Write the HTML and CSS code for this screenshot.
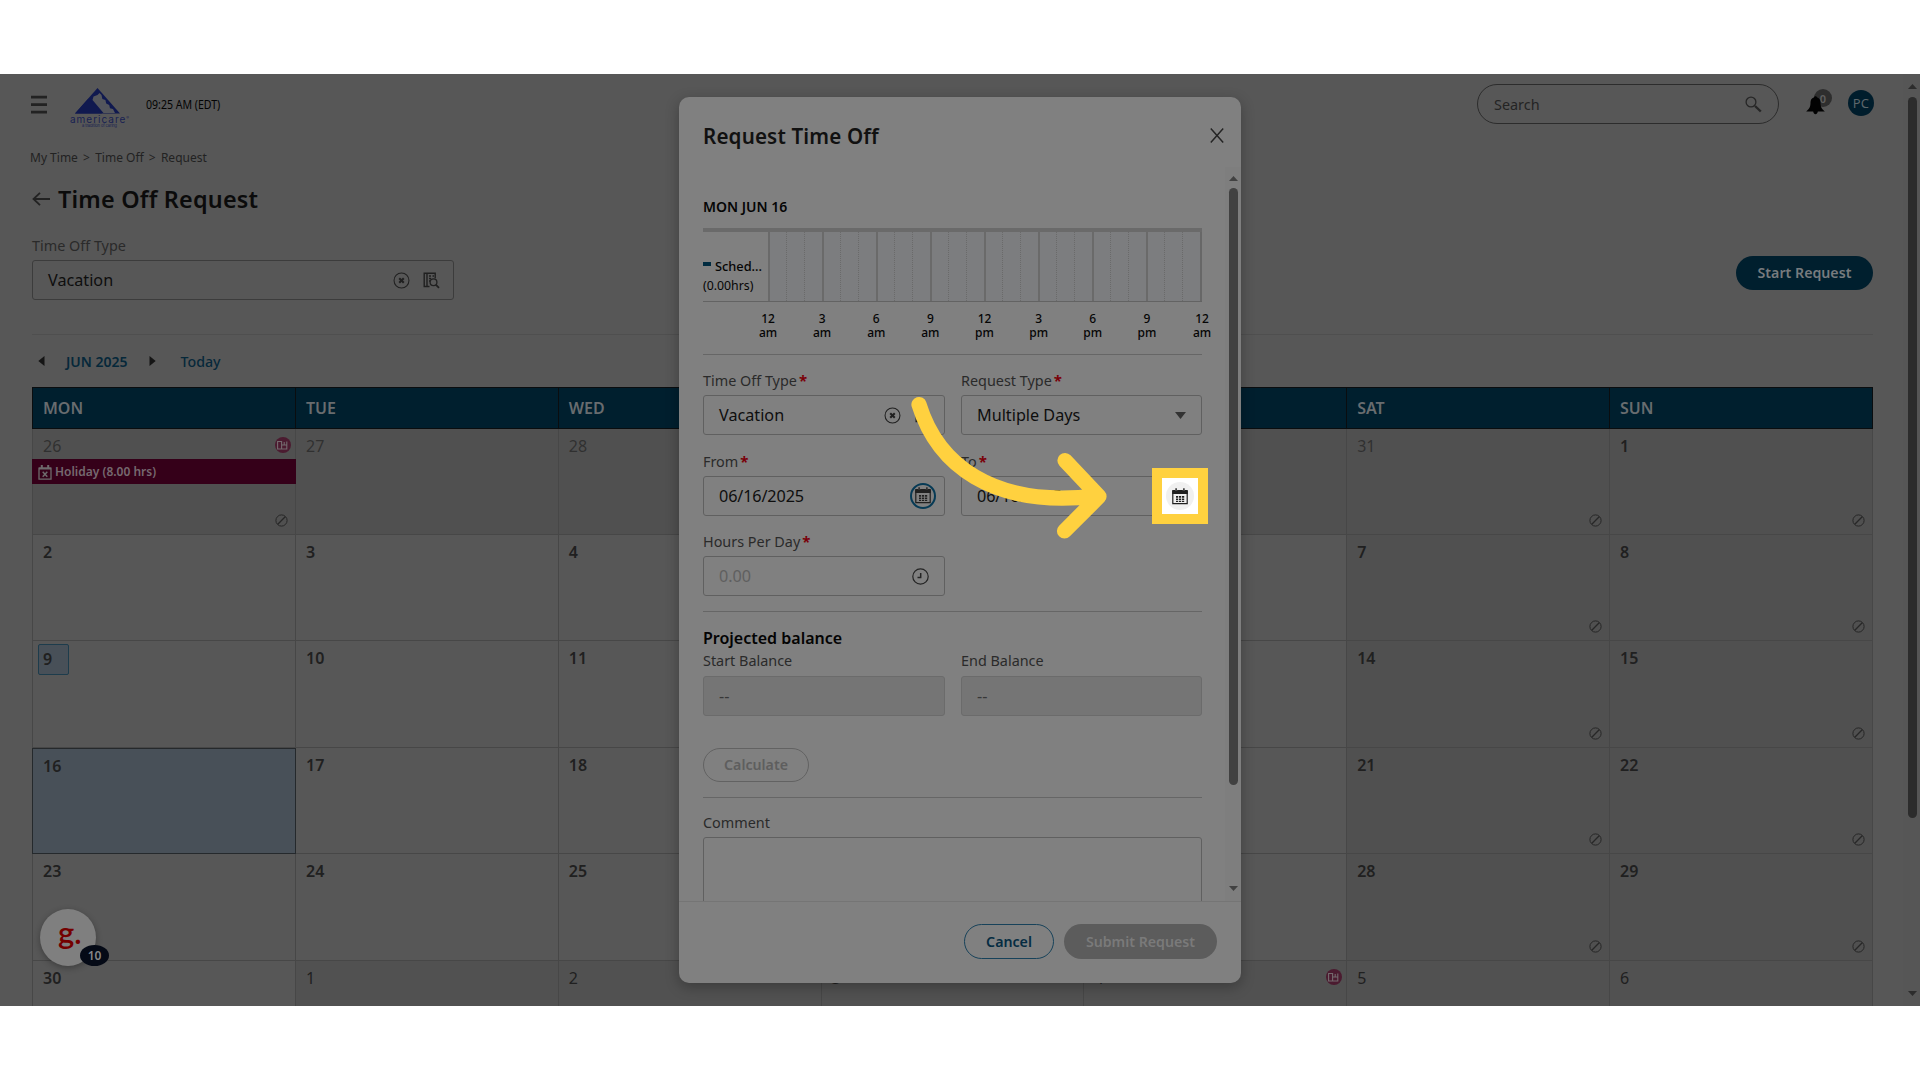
FILE: index.html
```
<!DOCTYPE html>
<html lang="en">
<head>
<meta charset="utf-8">
<title>Time Off Request</title>
<link rel="stylesheet" href="styles.css">
</head>
<body>
<svg class="defs" width="0" height="0">
  <symbol id="i-block" viewBox="0 0 13 13"><circle cx="6.5" cy="6.5" r="5.6" fill="none" stroke="currentColor"/><path d="M2.8 10.2 10.2 2.8" stroke="currentColor" stroke-width="1.3"/></symbol>
  <symbol id="i-badge" viewBox="0 0 16 16"><circle cx="8" cy="8" r="8" fill="#4b1b30"/><path d="M2.600 4.500h4v7.500h-4zM6.600 8h5.200M6.600 12h5.200V4.500M9.200 5v3" fill="none" stroke="#746a6e" stroke-width="1.100"/></symbol>
  <symbol id="i-clear" viewBox="0 0 18 18"><circle cx="9" cy="9" r="7.900" fill="none" stroke="currentColor" stroke-width="1.100"/><path d="M6.600 6.600l4.800 4.800M11.400 6.600l-4.800 4.800" stroke="currentColor" stroke-width="2.200"/></symbol>
  <symbol id="i-lookup" viewBox="0 0 17 17"><path d="M6.500 14.500h-5.300V1.200h11v5M4 1v13.500M6 4h2M9.500 4h1.500M6 6.500h2M6 9h1" fill="none" stroke="currentColor" stroke-width="1.400"/><circle cx="10.500" cy="10.200" r="3.400" fill="none" stroke="currentColor" stroke-width="1.300"/><path d="M13 12.800l3 3" stroke="currentColor" stroke-width="1.800"/></symbol>
  <symbol id="i-cal" viewBox="0 0 16 17"><path d="M.8 3.500h14.400V15.700H.8z" fill="none" stroke="currentColor" stroke-width="1.200"/><path d="M.2 2h3v1.800h1.900V2h5.800v1.800h1.900V2h3v4H.2zM3.400.3h1.400v3H3.400zM11.200.3h1.400v3h-1.400z" fill="currentColor"/><path d="M4 8h2.200v1.800H4zM7 8h2.200v1.800H7zM10 8h2.200v1.800H10zM4 10.500h2.200v1.600H4zM7 10.500h2.200v1.600H7zM10 10.500h2.200v1.600H10zM4 12.700h2.200v1.200H4zM7 12.700h2.200v1.200H7zM10 12.700h2.200v1.200H10z" fill="currentColor"/></symbol>
</svg>

<div class="app">
  <main class="page">
    <header class="topbar">
      <svg class="menu" width="16" height="19" viewBox="0 0 16 19"><path d="M0 2.200h16M0 9.700h16M0 17.200h16" stroke="#222" stroke-width="2.800"/></svg>
      <div class="logo">
        <svg width="46" height="26" viewBox="0 0 46 26"><path d="M22.500 0 45 25.500H0z" fill="#10194f"/><path d="M18.500 8.500 17.500 12l11 13H40l-2-4-3-.8-.8-3.200-3-1.500-.8-3.500-3-1L26.500 7l-2-2-2 2z" fill="#54565c"/><path d="M13.500 10.500 27 25.500H0z" fill="#10194f"/></svg>
        <span class="logo-name">americare<sup>®</sup></span>
        <span class="logo-tag">a tradition of caring</span>
      </div>
      <span class="clock">09:25 AM (EDT)</span>
      <div class="search"><span>Search</span>
        <svg width="17" height="17" viewBox="0 0 17 17" fill="none" stroke="#262626"><circle cx="6" cy="6" r="4.900" stroke-width="1.300"/><path d="M10 10l5.800 5.500" stroke-width="2.400"/></svg>
      </div>
      <div class="bell">
        <span class="count">0</span>
        <svg width="19" height="19" viewBox="0 0 19 19"><path d="M9.500.2c-.8 0-1.500.6-1.700 1.400C5.500 2.200 4.600 4 4.500 6.500c-.1 4-.5 5.500-4.300 9h7c.3 1.700 1.200 2.700 2.300 2.700s2-1 2.300-2.700h7c-3.800-3.500-4.200-5-4.300-9-.1-2.500-1-4.300-3.300-4.900C11 .8 10.300.2 9.500.2z" fill="#020202"/></svg>
      </div>
      <span class="avatar">PC</span>
    </header>
    <nav class="crumbs"><span>My Time</span><span>&gt;</span><span>Time Off</span><span>&gt;</span><span>Request</span></nav>
    <div class="title">
      <svg width="18" height="14" viewBox="0 0 18 14" fill="none" stroke="#222" stroke-width="1.800"><path d="M18 7H1.500M8 .8 1.500 7 8 13.200"/></svg>
      <h1>Time Off Request</h1>
    </div>
    <section class="filter">
      <div class="field"><label>Time Off Type</label>
        <div class="input"><span>Vacation</span><svg class="clear" width="17" height="17"><use href="#i-clear"/></svg><svg width="17" height="17"><use href="#i-lookup"/></svg></div>
      </div>
      <button class="start">Start Request</button>
    </section>
    <div class="calnav">
      <svg width="7" height="10" viewBox="0 0 7 10"><path d="M6.500 0v10L.3 5z" fill="#151515"/></svg>
      <b>JUN 2025</b>
      <svg width="7" height="10" viewBox="0 0 7 10"><path d="M.5 0v10l6.200-5z" fill="#151515"/></svg>
      <span>Today</span>
    </div>
    <section class="calendar">
      <div class="head">MON</div><div class="head">TUE</div><div class="head">WED</div><div class="head">THU</div><div class="head">FRI</div><div class="head">SAT</div><div class="head">SUN</div>

      <div class="day out blocked"><span>26</span><svg class="mark" width="16" height="16"><use href="#i-badge"/></svg>
        <div class="event"><svg width="14" height="15" viewBox="0 0 14 15" fill="none" stroke="#6e6a6c"><path d="M1 3.200h12v11H1z" stroke-width="1.300"/><path d="M1 3.500h12M3.800 0v4M10.200 0v4" stroke-width="2"/><path d="M4.700 6.800l4.600 5M9.300 6.800l-4.600 5" stroke-width="1.500"/></svg>Holiday (8.00 hrs)</div>
        <svg class="block" width="13" height="13"><use href="#i-block"/></svg></div>
      <div class="day out"><span>27</span></div><div class="day out"><span>28</span></div><div class="day out"><span>29</span></div><div class="day out"><span>30</span></div>
      <div class="day out"><span>31</span><svg class="block" width="13" height="13"><use href="#i-block"/></svg></div>
      <div class="day off"><span>1</span><svg class="block" width="13" height="13"><use href="#i-block"/></svg></div>

      <div class="day"><span>2</span></div><div class="day"><span>3</span></div><div class="day"><span>4</span></div><div class="day"><span>5</span></div><div class="day"><span>6</span></div>
      <div class="day off"><span>7</span><svg class="block" width="13" height="13"><use href="#i-block"/></svg></div>
      <div class="day off"><span>8</span><svg class="block" width="13" height="13"><use href="#i-block"/></svg></div>

      <div class="day today"><span>9</span></div><div class="day"><span>10</span></div><div class="day"><span>11</span></div><div class="day"><span>12</span></div><div class="day"><span>13</span></div>
      <div class="day off"><span>14</span><svg class="block" width="13" height="13"><use href="#i-block"/></svg></div>
      <div class="day off"><span>15</span><svg class="block" width="13" height="13"><use href="#i-block"/></svg></div>

      <div class="day picked"><span>16</span></div><div class="day"><span>17</span></div><div class="day"><span>18</span></div><div class="day"><span>19</span></div><div class="day"><span>20</span></div>
      <div class="day off"><span>21</span><svg class="block" width="13" height="13"><use href="#i-block"/></svg></div>
      <div class="day off"><span>22</span><svg class="block" width="13" height="13"><use href="#i-block"/></svg></div>

      <div class="day"><span>23</span></div><div class="day"><span>24</span></div><div class="day"><span>25</span></div><div class="day"><span>26</span></div><div class="day"><span>27</span></div>
      <div class="day off"><span>28</span><svg class="block" width="13" height="13"><use href="#i-block"/></svg></div>
      <div class="day off"><span>29</span><svg class="block" width="13" height="13"><use href="#i-block"/></svg></div>

      <div class="day"><span>30</span></div><div class="day next"><span>1</span></div><div class="day next"><span>2</span></div><div class="day next"><span>3</span></div>
      <div class="day next"><span>4</span><svg class="mark" width="16" height="16"><use href="#i-badge"/></svg></div><div class="day next"><span>5</span></div><div class="day next"><span>6</span></div>
    </section>
  </main>
  <div class="scroll">
    <svg width="9" height="5" viewBox="0 0 9 5"><path d="M0 5h9L4.500 0z" fill="#2c2c2c"/></svg>
    <div class="thumb"></div>
    <svg width="9" height="5" viewBox="0 0 9 5"><path d="M0 0h9L4.500 5z" fill="#2c2c2c"/></svg>
  </div>

  <div class="helper"><span class="g">g.</span><span class="steps">10</span></div>

  <section class="modal">
    <header class="mhead"><h2>Request Time Off</h2>
      <svg width="14" height="15" viewBox="0 0 14 15" stroke="#242424" stroke-width="1.500"><path d="M.8.500l12.400 14M13.200.500.8 14.500"/></svg>
    </header>
    <div class="mbody">
      <div class="form">
        <h3>MON JUN 16</h3>
        <div class="chart">
          <div class="legend"><div><i></i>Sched...</div><span>(0.00hrs)</span></div>
          <div class="hours"><i></i><i></i><i></i><i></i><i></i><i></i><i></i><i></i><i></i><i></i><i></i><i></i><i></i><i></i><i></i><i></i><i></i><i></i><i></i><i></i><i></i><i></i><i></i><i></i></div>
        </div>
        <div class="axis"><span>12<br>am</span><span>3<br>am</span><span>6<br>am</span><span>9<br>am</span><span>12<br>pm</span><span>3<br>pm</span><span>6<br>pm</span><span>9<br>pm</span><span>12<br>am</span></div>
        <div class="fields">
          <div class="field"><label>Time Off Type<em>*</em></label><div class="input picker"><span>Vacation</span><svg class="clear" width="17" height="17"><use href="#i-clear"/></svg><svg width="17" height="17"><use href="#i-lookup"/></svg></div></div>
          <div class="field"><label>Request Type<em>*</em></label><div class="input"><span>Multiple Days</span><svg class="caret" width="11" height="7" viewBox="0 0 11 7"><path d="M0 0h11L5.500 7z" fill="#333"/></svg></div></div>
          <div class="field"><label>From<em>*</em></label><div class="input date"><span>06/16/2025</span><span class="ring"><svg width="16" height="17"><use href="#i-cal"/></svg></span></div></div>
          <div class="field"><label>To<em>*</em></label><div class="input date"><span>06/16/2025</span></div></div>
          <div class="field"><label>Hours Per Day<em>*</em></label><div class="input hint"><span>0.00</span><svg class="time" width="17" height="17" viewBox="0 0 17 17" fill="none" stroke="#242424"><circle cx="8.500" cy="8.500" r="7.700" stroke-width="1.200"/><path d="M8.700 5v4.500H5.500" stroke-width="1.500"/></svg></div></div>
        </div>
        <div class="balance">
          <h4>Projected balance</h4>
          <div class="pair">
            <div class="field"><label>Start Balance</label><div class="input ro"><span>--</span></div></div>
            <div class="field"><label>End Balance</label><div class="input ro"><span>--</span></div></div>
          </div>
          <button class="calc">Calculate</button>
        </div>
        <div class="comment"><label>Comment</label><div class="area"></div></div>
      </div>
      <div class="mscroll">
        <svg width="9" height="5" viewBox="0 0 9 5"><path d="M0 5h9L4.500 0z" fill="#414141"/></svg>
        <div class="thumb"></div>
        <svg width="9" height="5" viewBox="0 0 9 5"><path d="M0 0h9L4.500 5z" fill="#414141"/></svg>
      </div>
    </div>
    <footer><button class="cancel">Cancel</button><button class="submit">Submit Request</button></footer>
  </section>

  <div class="spot"><span><svg width="16" height="17"><use href="#i-cal"/></svg></span></div>
  <svg class="arrow" width="210" height="160" viewBox="905 385 210 160" fill="none" stroke="#ffd13f" stroke-width="15.200" stroke-linecap="round" stroke-linejoin="round"><path d="M919 404.500C937 463 991 508.500 1096 496M1065 460.500 1099 496.500 1064.500 531"/></svg>
</div>
</body>
</html>
```
FILE: styles.css
```
* { box-sizing: border-box; margin: 0; }
body { background: #fff; font-family: "Noto Sans", sans-serif; padding: 74px 0; }
button { font: 600 14.2px/1 "Noto Sans", sans-serif; padding: 0; border: 0; border-radius: 18px; }
svg { display: block; flex: none; }
.defs { position: absolute; }

.app { position: relative; display: flex; width: 1920px; height: 932px; overflow: hidden; background: #575757; }
.page { width: 1903px; padding: 0 29px 0 32px; overflow: hidden; }

.topbar { display: flex; align-items: center; height: 60px; margin-left: -1px; }
.menu { margin: 0 22px 0 0; }
.logo { display: flex; flex-direction: column; align-items: center; width: 61px; height: 40px; margin: 7px 16px 0 0; color: #171f52; }
.logo > svg { margin-right: 3px; }
.logo-name { font: 10px/10px Inter, sans-serif; letter-spacing: 1px; white-space: nowrap; }
.logo-name sup { font-size: 4px; vertical-align: 4px; line-height: 0; letter-spacing: 0; }
.logo-tag { font: 4px/4px Inter, sans-serif; letter-spacing: -0.1px; }
.clock { width: 75px; padding-top: 1px; font-size: 12px; white-space: nowrap; transform: scaleX(0.88); transform-origin: left; color: #040404; }
.search { display: flex; align-items: center; justify-content: space-between; width: 302px; height: 40px; margin-left: auto; border: 1px solid #2c2c2c; border-radius: 20px; padding: 0 16px; font-size: 14.4px; color: #242424; }
.search span { padding-top: 1px; }
.bell { position: relative; width: 26px; height: 26px; margin: -4px 16px 0 27px; }
.bell svg { position: absolute; left: 0; top: 7px; }
.count { position: absolute; left: 8px; top: 0; width: 18px; height: 18px; border-radius: 50%; background: #2e2e2e; color: #606060; font: 600 11px/19px "Noto Sans", sans-serif; text-align: center; }
.avatar { width: 26px; height: 26px; margin-top: -2px; border-radius: 50%; background: #001d2c; color: #5d666b; font-size: 13px; line-height: 27px; text-align: center; letter-spacing: 0.3px; }

.crumbs { display: flex; gap: 5.2px; height: 24px; margin: 12px 0 0 -2px; font-size: 12px; line-height: 24px; color: #222; }
.title { display: flex; align-items: center; gap: 8px; height: 36px; margin-top: 11px; }
.title h1 { font-size: 23.4px; font-weight: 600; line-height: 36px; letter-spacing: 0.2px; color: #0b0b0b; }

.filter { display: flex; justify-content: space-between; width: 1841px; height: 99px; margin-top: 19px; border-bottom: 1px solid #4f4f4f; }
.filter .field { width: 422px; }
.field label, .comment label { display: block; height: 24px; font-size: 14.4px; line-height: 20px; white-space: nowrap; color: #2a2a2a; }
.input { display: flex; align-items: center; height: 40px; border: 1px solid #3c3c3c; border-radius: 3px; padding: 0 13px 0 15px; font-size: 16.2px; color: #0e0e0e; }
.input > span:first-child { margin-right: auto; }
.input svg { color: #202020; }
.input .clear { margin-right: 13px; }
.start { width: 137px; height: 34px; margin-top: 20px; background: #001f2e; color: #777b7e; }

.calnav { display: flex; align-items: center; height: 52px; padding-left: 6px; font-size: 14.2px; color: #06283a; font-weight: 500; }
.calnav b { font-weight: 600; margin: 0 21px 0 21px; font-size: 14px; }
.calnav span { margin-left: 25px; }

.calendar { display: grid; grid-template-columns: 263px repeat(6, 262.8px); grid-template-rows: 42px 106px 106px 107px 106px 107px 106px; border-left: 1px solid #474747; }
.head { background: #001f2e; border: solid #0a0d0f; border-width: 1px 1px 1px 0; padding-left: 10px; font-size: 16px; font-weight: 600; line-height: 40px; color: #686c6f; }
.head:first-child { margin-left: -1px; border-left-width: 1px; }
.day { position: relative; border: solid #474747; border-width: 0 1px 1px 0; padding: 6px 0 0 10px; font-size: 16px; line-height: 22px; font-weight: 600; color: #202020; }
.out, .next { font-weight: 400; background: #505050; }
.out { color: #303030; }
.next { background: #515151; }
.off { background: #505050; }
.mark { position: absolute; right: 4px; top: 8px; }
.block { position: absolute; right: 7px; bottom: 7px; color: #272727; }
.event { display: flex; align-items: center; gap: 3px; height: 25px; margin: 2px -1px 0 -11px; padding-left: 6px; background: #350019; color: #75696f; font-size: 12px; font-weight: 600; }
.event svg { margin-top: 2px; }
.today span { display: block; width: 31px; height: 31px; margin: -3px 0 0 -5px; padding: 2px 0 0 4px; background: #485058; border: 1px solid #1d3c4c; border-radius: 2px; line-height: 24px; }
.picked { background: #485058; border: 1px solid #25292c; margin-left: -1px; padding-top: 6px; }

.scroll { display: flex; flex-direction: column; align-items: center; width: 17px; padding: 10px 0 10px 2px; background: #565656; }
.scroll .thumb { width: 9px; height: 721px; margin: 8px 0 auto; border-radius: 5px; background: #2c2c2c; }

.helper { position: absolute; left: 40px; top: 835px; width: 56px; height: 57px; border-radius: 50%; background: #7f7f7f; box-shadow: 0 2px 6px rgba(0,0,0,.3); }
.g { position: absolute; left: 18px; top: 3px; font: 600 31px/40px Lato, sans-serif; color: #740000; }
.steps { position: absolute; left: 40px; top: 36px; width: 29px; height: 21px; border-radius: 50%; background: #050a16; color: #848688; font: 600 12px/21px "Noto Sans", sans-serif; text-align: center; }

.modal { position: absolute; left: 679px; top: 23px; width: 562px; height: 886px; display: flex; flex-direction: column; overflow: hidden; border-radius: 10px; background: #808080; box-shadow: 0 4px 14px rgba(0,0,0,.28); }
.mhead { display: flex; justify-content: space-between; align-items: center; height: 70px; padding: 7px 17px 0 24px; flex: none; }
.mhead h2 { font-size: 20.6px; font-weight: 600; letter-spacing: 0.15px; color: #111; }
.mbody { display: flex; height: 734px; overflow: hidden; }
.form { width: 523px; padding: 29px 0 0 24px; }
.form h3 { height: 32px; font-size: 14px; line-height: 22px; font-weight: 600; color: #050505; }
.chart { display: flex; width: 499px; height: 74px; border-top: 4px solid #6a6a6a; border-bottom: 1px solid #636363; }
.legend { width: 65px; padding-top: 25px; font-size: 12.3px; line-height: 19px; color: #050505; white-space: nowrap; }
.legend div { display: flex; font-weight: 500; font-size: 12.8px; }
.legend i { width: 8px; height: 4px; margin: 5px 4px 0 0; background: #002b40; }
.hours { display: grid; grid-template-columns: repeat(24, 1fr); width: 434px; border-right: 2px solid #676767; background: #7c7d7f; }
.hours i { border-left: 1px dotted #6a6a6a; }
.hours i:nth-child(3n+1) { border-left: 2px solid #6a6a6a; }
.axis { display: flex; justify-content: space-between; width: 461px; height: 52px; margin-left: 51px; padding-top: 10px; font-size: 12px; font-weight: 500; line-height: 14px; text-align: center; color: #050505; }
.axis span { width: 28px; }
.axis span:last-child { padding-left: 2px; }
.fields { display: grid; grid-template-columns: 242px 241px; column-gap: 16px; row-gap: 16.5px; width: 499px; padding: 16px 0 15px; border: solid #666; border-width: 1px 0; }
.modal .input { border-color: #606060; padding-right: 15px; }
.modal .picker { padding-right: 12px; }
.modal .input .clear { margin-right: 14px; }
.modal .date { letter-spacing: -0.12px; }
.field em { font-style: normal; font-weight: 700; margin-left: 2px; color: #7a0009; font-size: 15px; line-height: 1; }
.input .ring { display: flex; align-items: center; justify-content: center; width: 26px; height: 26px; margin-right: -7px; border: 2px solid #063a55; border-radius: 50%; }
.modal .hint { color: #5f5f5f; }
.balance { width: 499px; padding: 15px 0; border-bottom: 1px solid #666; }
.balance h4 { height: 24px; font-size: 16px; line-height: 22px; font-weight: 600; color: #040404; }
.pair { display: grid; grid-template-columns: 242px 241px; gap: 16px; }
.modal .ro { background: #757575; border-color: #6b6b6b; color: #383838; }
.calc { display: block; width: 106px; height: 34px; margin-top: 32px; border: 1px solid #626262; background: none; color: #5e5e5e; }
.pair label { height: 25px; }
.comment { width: 499px; padding-top: 15px; }
.area { height: 80px; border: 1px solid #606060; border-radius: 3px; }
.mscroll { display: flex; flex-direction: column; align-items: center; width: 16px; margin-left: 23px; padding: 9px 0 10px 1px; background: #7e7e7e; flex: none; }
.mscroll .thumb { width: 9px; height: 597px; margin: 7px 0 auto; border-radius: 5px; background: #414141; }
.modal footer { display: flex; justify-content: flex-end; gap: 10px; flex: 1; padding: 22px 24px 0 0; border-top: 1px solid #757575; }
.modal footer button { padding-top: 1px; }
.cancel { width: 90px; height: 35px; border: 1.5px solid #17425a; background: none; color: #052c42; }
.submit { width: 153px; height: 35px; background: #5c5c5c; color: #7a7a7a; }

.spot { position: absolute; left: 1152px; top: 394px; width: 56px; height: 56px; display: flex; align-items: center; justify-content: center; border: 10px solid #ffd13f; background: #fff; }
.spot span { display: flex; align-items: center; justify-content: center; width: 28px; height: 28px; border-radius: 50%; background: #f0f0f0; color: #202020; }
.arrow { position: absolute; left: 905px; top: 311px; }
```
